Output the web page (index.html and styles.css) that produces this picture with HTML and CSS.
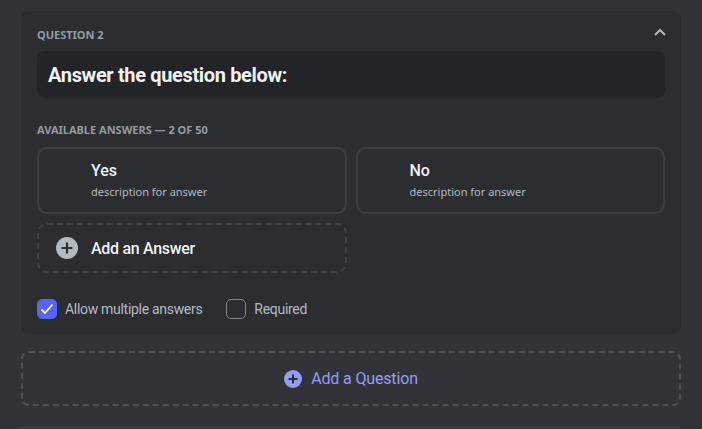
FILE: index.html
```html
<!DOCTYPE html>
<html>
<head>
<meta charset="utf-8">
<link rel="stylesheet" href="styles.css">
</head>
<body>
<div class="page">
  <section class="card">
    <div class="card-head">
      <span class="label">Question 2</span>
      <svg class="chevron" width="12" height="8" viewBox="0 0 12 8"><path d="M1 7 L6 2 L11 7" fill="none" stroke="#b5bac1" stroke-width="2"/></svg>
    </div>
    <div class="question-input">Answer the question below:</div>
    <div class="label answers-label">Available Answers — 2 of 50</div>
    <div class="answers">
      <div class="answer">
        <div class="answer-title">Yes</div>
        <div class="answer-desc">description for answer</div>
      </div>
      <div class="answer">
        <div class="answer-title">No</div>
        <div class="answer-desc">description for answer</div>
      </div>
      <div class="add-answer">
        <svg class="plus" width="22" height="22" viewBox="0 0 22 22"><circle cx="11" cy="11" r="11" fill="#b5bac1"/><path d="M11 5.5 V16.5 M5.5 11 H16.5" stroke="#2b2d31" stroke-width="2.2"/></svg>
        <span>Add an Answer</span>
      </div>
    </div>
    <div class="options">
      <label class="opt"><span class="box checked"><svg width="16" height="16" viewBox="0 0 16 16"><path d="M2.5 8.5 L6 12 L13.5 3.5" fill="none" stroke="#fff" stroke-width="1.8"/></svg></span>Allow multiple answers</label>
      <label class="opt"><span class="box"></span>Required</label>
    </div>
  </section>
  <div class="add-question">
    <svg width="18" height="18" viewBox="0 0 18 18"><circle cx="9" cy="9" r="9" fill="#949cf7"/><path d="M9 4.5 V13.5 M4.5 9 H13.5" stroke="#2b2d31" stroke-width="2"/></svg>
    <span>Add a Question</span>
  </div>
  <div class="divider"></div>
</div>
</body>
</html>
```

FILE: styles.css
```css
* { box-sizing: border-box; }
html, body { margin: 0; padding: 0; }
body {
  background: #313338;
  font-family: "Noto Sans", "Open Sans", sans-serif;
  color: #f2f3f5;
  width: 702px;
  height: 429px;
  overflow: hidden;
}
.page {
  padding: 11px 21px 0 21px;
  display: flex;
  flex-direction: column;
}
.card {
  background: #2b2d31;
  border-radius: 8px;
  padding: 16px 16px 15px 16px;
  display: flex;
  flex-direction: column;
}
.card-head {
  display: flex;
  justify-content: space-between;
  align-items: center;
  height: 16px;
}
.chevron { margin-right: -1px; margin-top: -7px; }
.label {
  font-size: 11px;
  font-weight: 700;
  text-transform: uppercase;
  color: #949ba4;
  line-height: 16px;
}
.question-input {
  margin-top: 8px;
  height: 47px;
  background: #232428;
  border-radius: 8px;
  padding: 0 11px;
  display: flex;
  align-items: center;
  font-family: Roboto, "Noto Sans", sans-serif;
  font-size: 20px;
  font-weight: 700;
  letter-spacing: -0.35px;
  color: #f2f3f5;
}
.answers-label { margin-top: 24px; }
.answers {
  margin-top: 9px;
  display: grid;
  grid-template-columns: 1fr 1fr;
  gap: 9px;
}
.answer {
  height: 67px;
  border: 2px solid #3b3d44;
  border-radius: 10px;
  padding: 12px 0 0 52px;
  display: flex;
  flex-direction: column;
}
.answer-title {
  font-family: Roboto, "Noto Sans", sans-serif;
  font-size: 16px;
  font-weight: 500;
  line-height: 20px;
  color: #f2f3f5;
}
.answer-desc {
  margin-top: 3px;
  font-size: 11px;
  line-height: 16px;
  color: #b5bac1;
}
.add-answer {
  height: 50px;
  border: 2px dashed #3f4147;
  border-radius: 10px;
  display: flex;
  align-items: center;
  padding-left: 17px;
  gap: 13px;
  font-family: Roboto, "Noto Sans", sans-serif;
  font-size: 16px;
  font-weight: 500;
  letter-spacing: -0.3px;
  color: #f2f3f5;
}
.options {
  margin-top: 26px;
  display: flex;
  align-items: center;
  gap: 24px;
}
.opt {
  display: flex;
  align-items: center;
  gap: 8px;
  font-family: Roboto, "Noto Sans", sans-serif;
  font-size: 14px;
  letter-spacing: -0.3px;
  color: #b5bac1;
  line-height: 20px;
}
.box {
  width: 20px;
  height: 20px;
  border-radius: 5px;
  border: 1.5px solid #80848e;
  display: flex;
  align-items: center;
  justify-content: center;
}
.box.checked {
  background: #5865f2;
  border-color: #5865f2;
}
.add-question {
  margin-top: 17px;
  height: 55px;
  border: 2px dashed #4e5058;
  border-radius: 8px;
  display: flex;
  align-items: center;
  justify-content: center;
  gap: 9px;
  font-family: Roboto, "Noto Sans", sans-serif;
  font-size: 16px;
  letter-spacing: -0.15px;
  color: #949cf7;
}
.divider {
  margin-top: 21px;
  height: 1px;
  background: #3f4147;
}
```
